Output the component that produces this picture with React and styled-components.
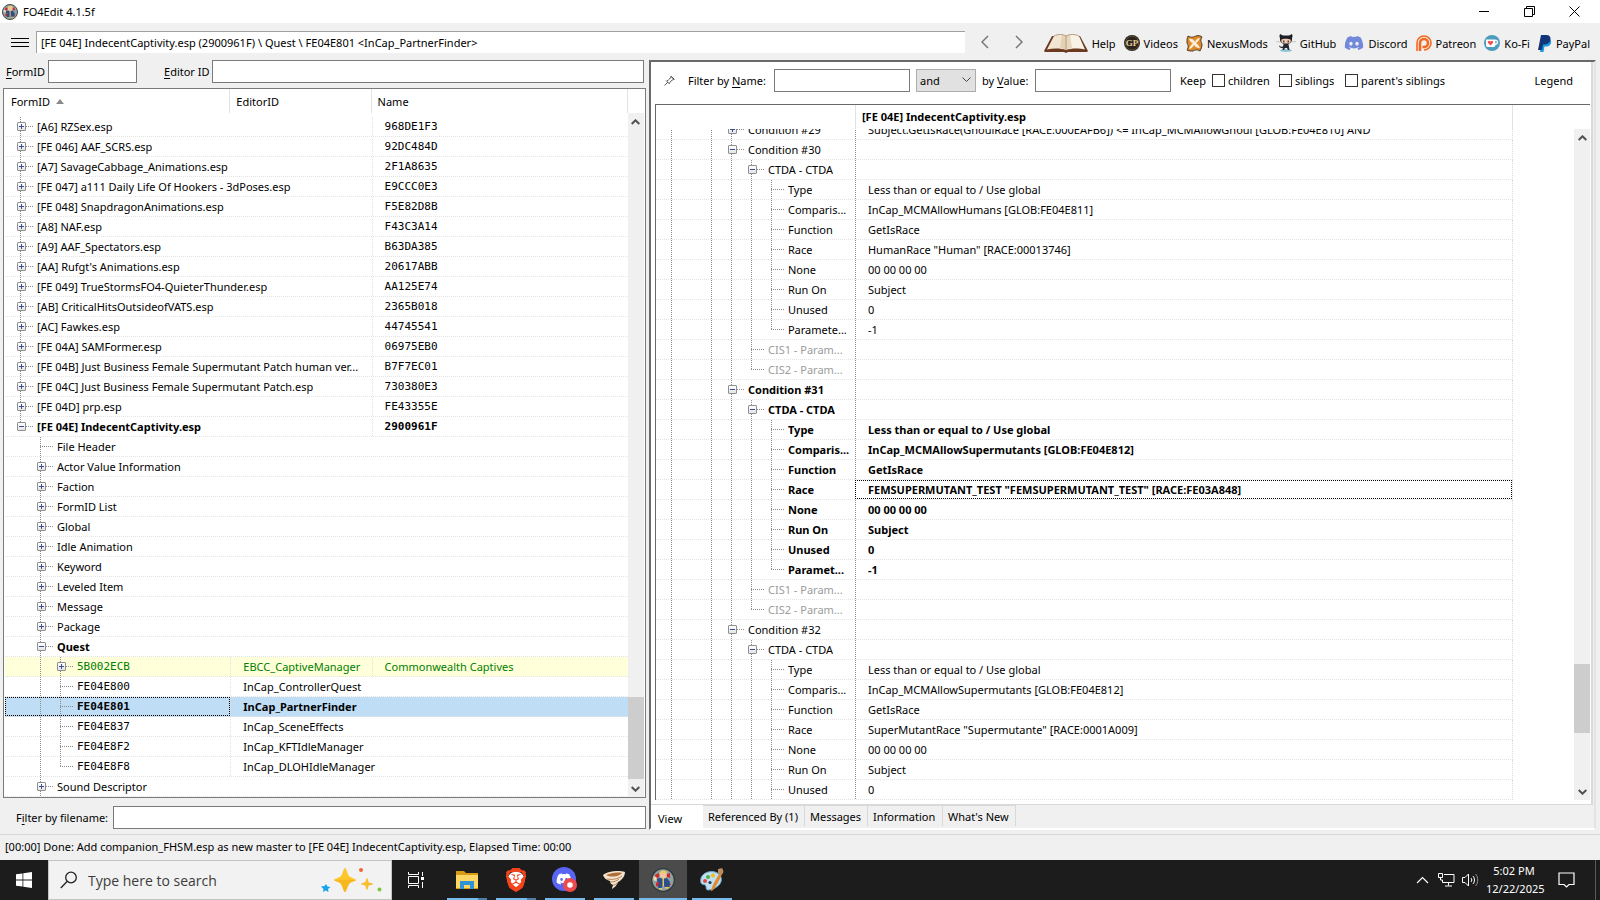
import React from "react"
import styled, { createGlobalStyle, css } from "styled-components"
import { FaDiscord } from "react-icons/fa"
import { SiBrave } from "react-icons/si"

const links = [
  { text: "Help", icon: "book", width: 44 },
  { text: "Videos", icon: "gp", width: 16 },
  { text: "NexusMods", icon: "nexus", width: 17 },
  { text: "GitHub", icon: "octocat", width: 20 },
  { text: "Discord", icon: "discord", width: 20 },
  { text: "Patreon", icon: "patreon", width: 16 },
  { text: "Ko-Fi", icon: "kofi", width: 16 },
  { text: "PayPal", icon: "paypal", width: 14 },
]

const files = [
  ["[A6] RZSex.esp", "968DE1F3"],
  ["[FE 046] AAF_SCRS.esp", "92DC484D"],
  ["[A7] SavageCabbage_Animations.esp", "2F1A8635"],
  ["[FE 047] a111 Daily Life Of Hookers - 3dPoses.esp", "E9CCC0E3"],
  ["[FE 048] SnapdragonAnimations.esp", "F5E82D8B"],
  ["[A8] NAF.esp", "F43C3A14"],
  ["[A9] AAF_Spectators.esp", "B63DA385"],
  ["[AA] Rufgt's Animations.esp", "20617ABB"],
  ["[FE 049] TrueStormsFO4-QuieterThunder.esp", "AA125E74"],
  ["[AB] CriticalHitsOutsideofVATS.esp", "2365B018"],
  ["[AC] Fawkes.esp", "44745541"],
  ["[FE 04A] SAMFormer.esp", "06975EB0"],
  ["[FE 04B] Just Business Female Supermutant Patch human ver...", "B7F7EC01"],
  ["[FE 04C] Just Business Female Supermutant Patch.esp", "730380E3"],
  ["[FE 04D] prp.esp", "FE43355E"],
]

const groups = [
  "Actor Value Information",
  "Faction",
  "FormID List",
  "Global",
  "Idle Animation",
  "Keyword",
  "Leveled Item",
  "Message",
  "Package",
]

const records = [
  { id: "5B002ECB", editor: "EBCC_CaptiveManager", name: "Commonwealth Captives", box: "+", master: true },
  { id: "FE04E800", editor: "InCap_ControllerQuest" },
  { id: "FE04E801", editor: "InCap_PartnerFinder", selected: true },
  { id: "FE04E837", editor: "InCap_SceneEffects" },
  { id: "FE04E8F2", editor: "InCap_KFTIdleManager" },
  { id: "FE04E8F8", editor: "InCap_DLOHIdleManager", last: true },
]

const condition = (title, fields, { bold = false, closed = true } = {}) => [
  { label: title, guides: "1011", box: "-", bold },
  { label: "CTDA - CTDA", guides: "10111", box: "-", bold },
  ...fields.map(([label, value, focused], i) => ({
    label,
    value,
    focused,
    bold,
    guides: "101111",
    last: closed && i === fields.length - 1,
  })),
  ...(closed
    ? [
        { label: "CIS1 - Param...", guides: "10111", muted: true },
        { label: "CIS2 - Param...", guides: "10111", muted: true, last: true },
      ]
    : []),
]

const elements = [
  {
    label: "Condition #29",
    guides: "1011",
    box: "+",
    value: "Subject.GetIsRace(GhoulRace [RACE:000EAFB6]) <= InCap_MCMAllowGhoul [GLOB:FE04E810] AND",
  },
  ...condition("Condition #30", [
    ["Type", "Less than or equal to / Use global"],
    ["Comparis...", "InCap_MCMAllowHumans [GLOB:FE04E811]"],
    ["Function", "GetIsRace"],
    ["Race", 'HumanRace "Human" [RACE:00013746]'],
    ["None", "00 00 00 00"],
    ["Run On", "Subject"],
    ["Unused", "0"],
    ["Paramete...", "-1"],
  ]),
  ...condition(
    "Condition #31",
    [
      ["Type", "Less than or equal to / Use global"],
      ["Comparis...", "InCap_MCMAllowSupermutants [GLOB:FE04E812]"],
      ["Function", "GetIsRace"],
      ["Race", 'FEMSUPERMUTANT_TEST "FEMSUPERMUTANT_TEST" [RACE:FE03A848]', true],
      ["None", "00 00 00 00"],
      ["Run On", "Subject"],
      ["Unused", "0"],
      ["Paramet...", "-1"],
    ],
    { bold: true }
  ),
  ...condition(
    "Condition #32",
    [
      ["Type", "Less than or equal to / Use global"],
      ["Comparis...", "InCap_MCMAllowSupermutants [GLOB:FE04E812]"],
      ["Function", "GetIsRace"],
      ["Race", 'SuperMutantRace "Supermutante" [RACE:0001A009]'],
      ["None", "00 00 00 00"],
      ["Run On", "Subject"],
      ["Unused", "0"],
    ],
    { closed: false }
  ),
]

const BrandIcon = ({ name }) => {
  switch (name) {
    case "book":
      return (
        <svg width="44" height="19" viewBox="0 0 44 19">
          <path d="M0 17 8 2h28l8 15-1 1H24l-2 1-2-1H1z" fill="#6b3a20" />
          <path d="M3 15.500 10 2c4-2 9-2 12 0v14c-5-2-13-2-19-.5z" fill="#f1e6d4" />
          <path d="M41 15.500 35 2c-4-2-9-2-13 0v14c5-2 13-2 19-.5z" fill="#f9f2e7" />
          <path d="M22 2c-2-1-3-1-4-1l-2 13c2 0 4 1 6 2 2-1 4-2 6-2L26 1c-2 0-3 0-4 1z" fill="#dcc3a2" opacity=".6" />
          <path d="M22 2v14M10 2c4-2 9-2 12 0 4-2 9-2 13 0" fill="none" stroke="#b59c7d" />
        </svg>
      )
    case "gp":
      return (
        <svg width="16" height="16" viewBox="0 0 16 16">
          <circle cx="8" cy="8" r="8" fill="#2c241b" />
          <circle cx="8" cy="8" r="6.800" fill="none" stroke="#5a4b36" />
          <text x="8" y="11" textAnchor="middle" fontFamily="Liberation Serif, serif" fontWeight="700" fontSize="9" fill="#e4cf9f">
            GP
          </text>
        </svg>
      )
    case "nexus":
      return (
        <svg width="17" height="17" viewBox="0 0 17 17">
          <path d="M2 1c3 2 6 1 8 0 2-1 5 0 6 1-2 3-1 5 0 7 0 3-1 5-2 7-3-2-5-1-7 0-2 0-5 0-6-1 2-3 1-5 0-7 0-3 0-5 1-7z" fill="#de8a27" stroke="#4d3a27" />
          <path d="M3 4c3-1 5 1 6 3 1-3 3-4 5-4-1 2-2 4-4 5 2 1 3 3 4 5-3 0-5-1-6-3-1 2-3 4-5 4 1-3 2-4 4-6-2 0-3-2-4-4z" fill="#fbeeda" />
        </svg>
      )
    case "octocat":
      return (
        <svg width="20" height="18" viewBox="0 0 20 18">
          <ellipse cx="10" cy="16.500" rx="6" ry="1.500" fill="#8dc4da" />
          <path d="M0 7.500 4 8M20 7.500 16 8" stroke="#aaa" strokeWidth=".6" />
          <path d="M4 0l3 1.500h6L16 0c.7 2 .6 3 0 4 .5 4-2 6-6 6s-6.500-2-6-6c-.6-1-.7-2 0-4z" fill="#1d2125" />
          <path d="M5.500 5.500c1-1 7-1 9 0 1 3-1 4-4.500 4s-5.300-1-4.500-4z" fill="#f2cbb4" />
          <path d="M7 6.500h1.500v2H7zM11.500 6.500H13v2h-1.500z" fill="#5b3a30" />
          <path d="M7.500 10h5l1 6H12l-1-2H9l-1 2H6.500zM3 11c1 2 3 2 5 1v1.500c-3 1-5 0-5-2.500z" fill="#22282e" />
        </svg>
      )
    case "discord":
      return <FaDiscord size={20} color="#7289da" />
    case "patreon":
      return (
        <svg width="16" height="16" viewBox="0 0 16 16">
          <path d="M1 16V8a7 7 0 1 1 7 7" fill="none" stroke="#f4681f" strokeWidth="1.600" />
          <path d="M4 16V8a4 4 0 1 1 4 4H6.500" fill="none" stroke="#f4681f" strokeWidth="2.600" />
        </svg>
      )
    case "kofi":
      return (
        <svg width="16" height="16" viewBox="0 0 16 16">
          <circle cx="8" cy="8" r="8" fill="#4b9cbf" />
          <path d="M2 4.500h9c4 0 4.500 5 .5 5.500-.5 1.500-1 2-2 2H4c-1.500 0-2-1-2-2z" fill="#fff" />
          <path d="M11.300 6v2.500c2 0 2-2.500 0-2.500z" fill="#4b9cbf" />
          <path d="M6.500 10.500 4 8c-1-2 1.500-3 2.500-1.500C7.500 5 10 6 9 8z" fill="#f0564f" />
        </svg>
      )
    default:
      return (
        <svg width="14" height="17" viewBox="0 0 14 17">
          <path d="M5 4h6.500c3 1.500 2 7.500-3.500 7.500H6.500L5.500 17H2z" fill="#1a9be0" />
          <path d="M3 0h5.500C15 0 13 9.500 7 9.500H5L4 15H0z" fill="#123479" />
        </svg>
      )
  }
}

const VaultBadge = ({ size }) => (
  <svg width={size} height={size} viewBox="0 0 24 24">
    <circle cx="12" cy="12" r="11.300" fill="#8fa0a2" stroke="#33393b" strokeWidth="1.300" />
    <path d="M4 7l4-2v4l-3 2zM16 6l3-1v5l-3-1zM5 15l3-2v6l-3-1zM17 15l3 1-2 3-2-1z" fill="#d3262a" />
    <path d="M5 11l4-1 3 1 4-1 3 4-1 6-4-1-2-2-2 4-3-1 1-6-3-1z" fill="#2a508c" />
    <path d="M11.500 10h1.500v8h-1.500zM8 20h3v1.500H8zM14 19h4v1.500h-4z" fill="#e8c75a" />
    <path d="M9 4.500h6.500V8c0 3-6.500 3-6.500 0z" fill="#efc6a0" />
    <path d="M8.500 6c-1-4 8-5 7.500-.5-2-1-5-1.500-7.500.5z" fill="#eed05e" />
    <path d="M2.500 8.500l3 .5.500 4-3.500-.5z" fill="#f0dcb0" />
  </svg>
)

const PinIcon = () => (
  <svg width="11" height="11" viewBox="0 0 11 11" fill="none" stroke="#55585d">
    <path d="M.5 10.500 4 7M2 5.500 5.500 9M3 6c1-1 2-1 2.500-2L7.500 1.500 10 4 7 6c-1 1-1 1.500-1.500 2.500M6.500 1l4 4" />
  </svg>
)

const TreeLabel = ({ guides, box, last, children, mono }) => (
  <Indent>
    {guides.slice(0, -1).split("").map((g, i) => (
      <Guide key={i} $line={g === "1"} />
    ))}
    <Node $last={last}>{box && <Expander type="button" $open={box === "-"} aria-label={box === "-" ? "Collapse" : "Expand"} />}</Node>
    <Label $mono={mono}>{children}</Label>
  </Indent>
)

const NavigationTree = () => (
  <Tree>
    <thead>
      <NavHeader>
        <NavHead>
          FormID <SortArrow />
        </NavHead>
        <NavHead>EditorID</NavHead>
        <NavHead>Name</NavHead>
      </NavHeader>
    </thead>
    <TreeRows>
      {files.map(([name, crc]) => (
        <NavRow key={name}>
          <Cell colSpan={2} $span={2}>
            <TreeLabel guides="1" box="+">{name}</TreeLabel>
          </Cell>
          <Cell $line $mono $pad>{crc}</Cell>
        </NavRow>
      ))}
      <NavRow $bold>
        <Cell colSpan={2} $span={2}>
          <TreeLabel guides="1" box="-" last>[FE 04E] IndecentCaptivity.esp</TreeLabel>
        </Cell>
        <Cell $line $mono $pad>2900961F</Cell>
      </NavRow>
      <NavRow>
        <Cell colSpan={3} $span={3}>
          <TreeLabel guides="01">File Header</TreeLabel>
        </Cell>
      </NavRow>
      {groups.map(name => (
        <NavRow key={name}>
          <Cell colSpan={3} $span={3}>
            <TreeLabel guides="01" box="+">{name}</TreeLabel>
          </Cell>
        </NavRow>
      ))}
      <NavRow $bold>
        <Cell colSpan={3} $span={3}>
          <TreeLabel guides="01" box="-">Quest</TreeLabel>
        </Cell>
      </NavRow>
      {records.map(({ id, editor, name, box, master, selected, last }) => (
        <NavRow key={id} $master={master} $selected={selected} $bold={selected}>
          <Cell $focused={selected}>
            <TreeLabel guides="011" box={box} last={last} mono>{id}</TreeLabel>
          </Cell>
          <Cell $line $pad colSpan={name ? 1 : 2} $span={name ? 1 : 2}>{editor}</Cell>
          {name && <Cell $line $pad>{name}</Cell>}
        </NavRow>
      ))}
      <NavRow>
        <Cell colSpan={3} $span={3}>
          <TreeLabel guides="01" box="+">Sound Descriptor</TreeLabel>
        </Cell>
      </NavRow>
    </TreeRows>
  </Tree>
)

const ElementTree = () => (
  <Tree>
    <thead>
      <ViewHeader>
        <ViewHead aria-label="Element" />
        <ViewHead>[FE 04E] IndecentCaptivity.esp</ViewHead>
      </ViewHeader>
    </thead>
    <TreeRows>
      {elements.map(({ label, value, guides, box, last, bold, muted, focused }, i) => (
        <ViewRow key={i} $bold={bold} $muted={muted}>
          <Cell>
            <TreeLabel guides={guides} box={box} last={last}>{label}</TreeLabel>
          </Cell>
          <Cell $dark $pad $focused={focused}>{value}</Cell>
        </ViewRow>
      ))}
    </TreeRows>
  </Tree>
)

const Arrow = ({ up }) => (
  <svg width="9" height="6" viewBox="0 0 9 6" fill="none" stroke="#505050" strokeWidth="2">
    <path d={up ? "M.7 5 4.500 1.300 8.300 5" : "M.7 1 4.500 4.700 8.300 1"} />
  </svg>
)

const ScrollBar = ({ before, thumb, after }) => (
  <Scroll>
    <ScrollButton type="button" aria-label="Scroll up"><Arrow up /></ScrollButton>
    <Track $grow={before} />
    <Thumb $grow={thumb} />
    <Track $grow={after} />
    <ScrollButton type="button" aria-label="Scroll down"><Arrow /></ScrollButton>
  </Scroll>
)

const App = () => (
  <Desktop>
    <GlobalStyle />
    <TitleBar>
      <VaultBadge size={16} />
      <Title>FO4Edit 4.1.5f</Title>
      <WindowButton type="button" aria-label="Minimize">
        <svg width="11" height="11"><path d="M0 5.500h10" stroke="#000" /></svg>
      </WindowButton>
      <WindowButton type="button" aria-label="Restore">
        <svg width="11" height="11" fill="none" stroke="#000"><path d="M.5 2.500h8v8h-8zM2.500 2.500v-2h8v8h-2" /></svg>
      </WindowButton>
      <WindowButton type="button" aria-label="Close">
        <svg width="11" height="11"><path d="M.5.5l10 10M10.500.5l-10 10" stroke="#000" /></svg>
      </WindowButton>
    </TitleBar>
    <ToolBar>
      <MenuButton type="button" aria-label="Menu"><i /><i /><i /></MenuButton>
      <Address aria-label="Path" readOnly value="[FE 04E] IndecentCaptivity.esp (2900961F) \ Quest \ FE04E801 <InCap_PartnerFinder>" />
      <NavButton type="button" aria-label="Back">
        <svg width="8" height="14" fill="none" stroke="#777"><path d="M7 1 1 7l6 6" strokeWidth="1.500" /></svg>
      </NavButton>
      <NavButton type="button" aria-label="Forward">
        <svg width="8" height="14" fill="none" stroke="#777"><path d="M1 1l6 6-6 6" strokeWidth="1.500" /></svg>
      </NavButton>
      <Links>
        {links.map(({ text, icon, width }) => (
          <ToolLink href="#" key={text}>
            <LinkIcon $width={width}><BrandIcon name={icon} /></LinkIcon>
            {text}
          </ToolLink>
        ))}
      </Links>
    </ToolBar>
    <Main>
      <LeftPanel>
        <SearchRow>
          <FieldLabel htmlFor="formid" $width={42}><u>F</u>ormID</FieldLabel>
          <TextBox id="formid" $width={89} />
          <FieldLabel htmlFor="editorid" $width={48} $space={27}><u>E</u>ditor ID</FieldLabel>
          <TextBox id="editorid" />
        </SearchRow>
        <TreeFrame>
          <NavigationTree />
          <ScrollGutter $top={24}>
            <ScrollBar before={570} thumb={82} after={1} />
          </ScrollGutter>
        </TreeFrame>
        <FileFilter>
          <FieldLabel htmlFor="filename" $width={97}>F<u>i</u>lter by filename:</FieldLabel>
          <TextBox id="filename" />
        </FileFilter>
      </LeftPanel>
      <RightPanel>
        <ViewPage>
          <ViewFilter>
            <PinButton type="button" aria-label="Pin"><PinIcon /></PinButton>
            <FieldLabel htmlFor="byname" $width={86}>Filter by <u>N</u>ame:</FieldLabel>
            <TextBox id="byname" $width={136} />
            <Combo aria-label="Operator" defaultValue="and">
              <option>and</option>
              <option>or</option>
            </Combo>
            <FieldLabel htmlFor="byvalue" $width={53}>by <u>V</u>alue:</FieldLabel>
            <TextBox id="byvalue" $width={136} />
            <Keep>Keep</Keep>
            <Check $width={67}><input type="checkbox" />children</Check>
            <Check $width={66}><input type="checkbox" />siblings</Check>
            <Check><input type="checkbox" />parent's siblings</Check>
            <Legend type="button">Legend</Legend>
          </ViewFilter>
          <ViewFrame>
            <ElementTree />
            <ScrollGutter $top={24} $left={61}>
              <ScrollBar before={519} thumb={69} after={50} />
            </ScrollGutter>
          </ViewFrame>
        </ViewPage>
        <Tabs role="tablist">
          <Tab type="button" role="tab" aria-selected="true" $active $width={52}>View</Tab>
          <Tab type="button" role="tab" $width={102}>Referenced By (1)</Tab>
          <Tab type="button" role="tab" $width={63}>Messages</Tab>
          <Tab type="button" role="tab" $width={75}>Information</Tab>
          <Tab type="button" role="tab" $width={73}>What's New</Tab>
        </Tabs>
      </RightPanel>
    </Main>
    <StatusBar>[00:00] Done: Add companion_FHSM.esp as new master to [FE 04E] IndecentCaptivity.esp, Elapsed Time: 00:00</StatusBar>
    <TaskBar>
      <StartButton type="button" aria-label="Start">
        <svg width="16" height="16" viewBox="0 0 16 16" fill="#fff">
          <path d="M0 2.300 6.500 1.400v6.200H0zM7.300 1.300 16 0v7.600H7.300zM0 8.400h6.500v6.200L0 13.700zM7.300 8.400H16V16l-8.700-1.200z" />
        </svg>
      </StartButton>
      <SearchBox>
        <svg width="18" height="18" viewBox="0 0 18 18" fill="none" stroke="#222" strokeWidth="1.300">
          <circle cx="11" cy="6.500" r="5.300" />
          <path d="M7 10.500.8 17" />
        </svg>
        <input aria-label="Search" placeholder="Type here to search" />
        <svg width="62" height="26" viewBox="0 0 62 26">
          <path d="M24 1c1.500 0 2.500 7 4.500 8.500S35 12 35 13s-4.500 1.500-6.500 3.500S25.500 25 24 25s-2.500-6.500-4.500-8.500S13 14 13 13s4.500-2 6.500-3.500S22.500 1 24 1z" fill="#fdc52a" />
          <path d="M24 25c-1.500 0-2.500-6.500-4.500-8.500S13 14 13 13h22c0 1-4.500 1.500-6.500 3.500S25.500 25 24 25z" fill="#f4a913" opacity=".5" />
          <path d="M46 11c1 0 1 4 2 4.500s4 .5 4 1.500-3 1-4 1.500-1 4.500-2 4.500-1-4-2-4.500-4-.5-4-1.500 3-1 4-1.500 1-4.500 2-4.500z" fill="#f9bd33" />
          <path d="M5 17l1.500 2.500 3 .5-2.500 2 .5 3-3-1.500L2 25l.5-3L0 19.500l3.500-.5z" fill="#16a5ea" />
          <circle cx="40" cy="3" r="2" fill="#ee6630" />
          <circle cx="58.500" cy="22.500" r="2" fill="#7ec63f" />
        </svg>
      </SearchBox>
      <TaskButton type="button" aria-label="Task View">
        <svg width="16" height="16" viewBox="0 0 16 16" fill="none" stroke="#fff">
          <path d="M.5 0v2.500h10V0M.5 16v-2.500h10V16M.5 4.500h10v7H.5zM14.500 0v4M14.500 10v6" />
          <path d="M13 5h3v3h-3z" fill="#fff" stroke="none" />
        </svg>
      </TaskButton>
      <RunningTasks>
        <TaskButton type="button" aria-label="File Explorer" $running $multi>
          <svg width="22" height="18" viewBox="0 0 22 18">
            <path d="M0 0h8l2 2h12v16H0z" fill="#d99a16" />
            <path d="M0 4h22v13H0z" fill="#fdd766" />
            <path d="M4 18v-8h14v8h-4v-4H8v4z" fill="#2d94d8" />
          </svg>
        </TaskButton>
        <TaskButton type="button" aria-label="Brave" $running $multi>
          <BraveMark><SiBrave size={24} color="#f4421a" /></BraveMark>
        </TaskButton>
        <TaskButton type="button" aria-label="Discord" $running>
          <svg width="26" height="26" viewBox="0 0 26 26">
            <circle cx="12" cy="12" r="12" fill="#5865f2" />
            <FaDiscord x="4" y="4" size={16} color="#fff" />
            <circle cx="18" cy="18" r="7" fill="#ed4a50" />
            <circle cx="18" cy="18" r="2.800" fill="#fff" />
          </svg>
        </TaskButton>
        <TaskButton type="button" aria-label="Vortex" $running>
          <svg width="22" height="18" viewBox="0 0 22 18">
            <path d="M0 4C5 0 16-1 22 1c0 4-3 8-7 10-1 3-3 5-6 7 0-2 1-3 1-4-2-1-3-2-3-4C3 9 1 7 0 4z" fill="#f3e3cd" />
            <path d="M3 4c5-2 11-3 16-2-2 3-10 5-16 2z" fill="#b06f38" />
            <path d="M4 8c6 1 11 0 15-3M7 11c4 0 7-1 9-3M10 14c2 0 3-1 4-2" fill="none" stroke="#b98253" />
          </svg>
        </TaskButton>
        <TaskButton type="button" aria-label="FO4Edit" $running $current>
          <VaultBadge size={24} />
        </TaskButton>
        <TaskButton type="button" aria-label="Paint" $running>
          <svg width="24" height="24" viewBox="0 0 24 24">
            <path d="M1 15C-1 7 7 2 15 4c7 2 8 9 4 13-3 3-7 5-11 5-3 0-1-4-3-5-1-1-3 0-4-2z" fill="#bfe0f1" stroke="#6ba5c6" />
            <circle cx="5" cy="13" r="2" fill="#e24540" />
            <circle cx="8" cy="9" r="2" fill="#4fae46" />
            <circle cx="13" cy="7.500" r="2" fill="#f2bb22" />
            <circle cx="10" cy="14.500" r="1.600" fill="#243b52" />
            <path d="M11 23c1-6 5-12 9-18l2 1c-3 7-6 13-10 17z" fill="#e1892f" />
            <path d="M18 1c3 0 4-2 5 1 1 2 0 4-2 5l-3-2z" fill="#b98d5e" />
          </svg>
        </TaskButton>
      </RunningTasks>
      <Tray>
        <TrayButton type="button" aria-label="Show hidden icons">
          <svg width="13" height="8" fill="none" stroke="#fff" strokeWidth="1.200"><path d="M1 7l5.500-5.500L12 7" /></svg>
        </TrayButton>
        <TrayButton type="button" aria-label="Network">
          <svg width="17" height="14" viewBox="0 0 17 14" fill="none" stroke="#fff">
            <path d="M6 1.500h10v8H4.500V7M.5.500h4v4h-4zM2.500 4.500V7h2M10.500 9.500v3M7 13h7" />
          </svg>
        </TrayButton>
        <TrayButton type="button" aria-label="Volume">
          <svg width="17" height="14" viewBox="0 0 17 14" fill="none" stroke="#fff">
            <path d="M.5 4.500H3L6.500 1v12L3 9.500H.5zM9 5c1 1 1 3 0 4M11 3c2 2 2 6 0 8" />
            <path d="M13.500 1c3 3 3 9 0 12" opacity=".5" />
          </svg>
        </TrayButton>
        <Clock>
          <time>5:02 PM</time>
          <time>12/22/2025</time>
        </Clock>
        <TrayButton type="button" aria-label="Notifications">
          <svg width="17" height="17" viewBox="0 0 17 17" fill="none" stroke="#fff" strokeWidth="1.200">
            <path d="M1 1h15v11.500h-5L8.500 15 6 12.500H1z" />
          </svg>
        </TrayButton>
      </Tray>
    </TaskBar>
  </Desktop>
)

export default App

const dots = (angle, color) => `repeating-linear-gradient(${angle}, ${color} 0 1px, transparent 1px 2px)`

const GlobalStyle = createGlobalStyle`
  * {
    box-sizing: border-box;
  }
  body {
    margin: 0;
    overflow: hidden;
  }
  body, input, select, button {
    font-family: "Noto Sans", "Open Sans", sans-serif;
    font-size: 11px;
    color: #000;
  }
  button {
    padding: 0;
    border: 0;
    background: none;
  }
  svg {
    display: block;
    flex: none;
  }
`
const Desktop = styled.div`
  display: flex;
  flex-direction: column;
  height: 100vh;
  background: #f0f0f0;
`
const TitleBar = styled.header`
  display: flex;
  align-items: center;
  height: 23px;
  padding: 0 3px 0 2px;
  background: #fff;
`
const Title = styled.span`
  flex: 1;
  margin-left: 5px;
`
const WindowButton = styled.button`
  display: flex;
  justify-content: center;
  align-items: center;
  width: 45px;
  height: 23px;
`
const ToolBar = styled.nav`
  display: flex;
  align-items: center;
  height: 37px;
  padding: 1px 10px 0 11px;
`
const MenuButton = styled.button`
  display: flex;
  flex-direction: column;
  gap: 3px;
  width: 18px;
  margin-right: 7px;

  i {
    height: 1px;
    background: #000;
  }
`
const Address = styled.input`
  flex: 1;
  min-width: 0;
  height: 22px;
  margin-right: 3px;
  padding: 0 0 1px 4px;
  border: solid #a0a0a0;
  border-width: 1px 0 0 1px;
  background: #fff;
  outline: 0;
`
const NavButton = styled.button`
  display: flex;
  justify-content: center;
  width: 34px;
`
const Links = styled.div`
  display: flex;
  gap: 8px;
  margin-left: 8px;
  padding-top: 2px;
`
const ToolLink = styled.a`
  display: flex;
  align-items: center;
  gap: 4px;
  color: #000;
  text-decoration: none;
`
const LinkIcon = styled.span`
  display: flex;
  justify-content: center;
  width: ${({ $width }) => $width}px;
`
const Main = styled.main`
  display: flex;
  flex: 1;
  min-height: 0;
  padding-right: 4px;
`
const LeftPanel = styled.section`
  display: flex;
  flex-direction: column;
  flex: 15 1 0;
  min-width: 0;
  padding: 0 3px;
`
const SearchRow = styled.div`
  display: flex;
  align-items: center;
  height: 28px;
  padding: 0 2px 5px 3px;
`
const FieldLabel = styled.label`
  flex: none;
  width: ${({ $width }) => $width}px;
  margin-left: ${({ $space = 0 }) => $space}px;
  white-space: nowrap;

  u {
    text-underline-offset: 2px;
  }
`
const TextBox = styled.input`
  flex: ${({ $width }) => ($width ? `0 0 ${$width}px` : "1")};
  min-width: 0;
  height: 23px;
  border: 1px solid #7a7a7a;
  background: #fff;
  outline: 0;
`
const TreeFrame = styled.div`
  display: flex;
  flex: 1;
  min-height: 0;
  padding: 0 1px;
  border: 1px solid #7a7a7a;
  background: #fff;
`
const Tree = styled.table`
  display: flex;
  flex: 1;
  flex-direction: column;
  min-width: 0;
  border-spacing: 0;

  thead {
    display: block;
  }
`
/* the tree is scrolled, so its rows hang from the lower edge */
const TreeRows = styled.tbody`
  display: flex;
  flex: 1;
  flex-direction: column;
  justify-content: flex-end;
  min-height: 0;
  overflow: hidden;
`
const columns = css`
  display: grid;
  grid-template-columns: minmax(0, 225fr) minmax(0, 141fr) minmax(0, 256fr);
`
const NavHeader = styled.tr`
  ${columns}
  height: 24px;
`
const NavHead = styled.th`
  display: flex;
  align-items: center;
  gap: 6px;
  padding: 0 6px;
  border-right: 1px solid #e2e2e2;
  font-weight: 400;
`
const SortArrow = styled.i`
  border: solid transparent;
  border-width: 0 4px 5px;
  border-bottom-color: #8a8a8a;
`
const rowLook = css`
  height: 20px;
  flex: none;
  font-weight: ${({ $bold }) => ($bold ? 700 : 400)};
  background: ${dots("90deg", "#e4e4e4")} 0 100% / 100% 1px no-repeat;
`
const NavRow = styled.tr`
  ${columns}
  ${rowLook}
  color: ${({ $master }) => ($master ? "#008000" : "#000")};
  background-color: ${({ $master, $selected }) => ($master ? "#ffffd9" : $selected ? "#bfddf5" : "transparent")};
`
const monoFont = css`
  font-family: "DejaVu Sans Mono", monospace;
`
const Cell = styled.td`
  grid-column: span ${({ $span = 1 }) => $span};
  min-width: 0;
  height: 19px;
  padding: 0 0 0 ${({ $pad }) => ($pad ? 13 : 0)}px;
  overflow: hidden;
  white-space: nowrap;
  line-height: 19px;
  background: ${({ $line, $dark }) =>
    $line || $dark ? `${dots("180deg", $dark ? "#8c8c8c" : "#e0e0e0")} 0 0 / 1px 100% no-repeat` : "none"};
  ${({ $mono }) => $mono && monoFont}
  ${({ $focused }) => $focused && "outline: 1px dotted #000; outline-offset: -1px;"}
`
const Indent = styled.div`
  display: flex;
  align-items: center;
  height: 19px;
  padding-left: 6px;
`
const Guide = styled.span`
  flex: none;
  width: 20px;
  height: 20px;
  background: ${({ $line }) => ($line ? `${dots("180deg", "#8c8c8c")} 9px 0 / 1px 100% no-repeat` : "none")};
`
const Node = styled.span`
  display: flex;
  align-items: center;
  flex: none;
  width: 26px;
  height: 20px;
  padding-left: 6px;
  background: ${dots("180deg", "#8c8c8c")} 9px 0 / 1px ${({ $last }) => ($last ? "50%" : "100%")} no-repeat,
    ${dots("90deg", "#8c8c8c")} 9px 9px / 14px 1px no-repeat;
`
const Expander = styled.button`
  width: 9px;
  height: 9px;
  border: 1px solid #8f8f8f;
  border-radius: 1px;
  background: linear-gradient(#3a4f9c, #3a4f9c) 1px 3px / 5px 1px no-repeat,
    ${({ $open }) => !$open && "linear-gradient(#3a4f9c, #3a4f9c) 3px 1px / 1px 5px no-repeat,"}
    linear-gradient(#fff, #e4e4e4);
`
const Label = styled.span`
  overflow: hidden;
  ${({ $mono }) => $mono && monoFont}
`
const ScrollGutter = styled.div`
  display: flex;
  padding-top: ${({ $top }) => $top}px;
  padding-left: ${({ $left = 0 }) => $left}px;
`
const Scroll = styled.div`
  display: flex;
  flex-direction: column;
  width: 16px;
  background: #f0f0f0;
`
const ScrollButton = styled.button`
  display: flex;
  justify-content: center;
  align-items: center;
  flex: none;
  height: 17px;
`
const Track = styled.div`
  flex: ${({ $grow }) => $grow} 1 0;
`
const Thumb = styled.div`
  flex: ${({ $grow }) => $grow} 1 0;
  background: #cdcdcd;
`
const FileFilter = styled.div`
  display: flex;
  align-items: center;
  height: 36px;
  padding: 3px 0 0 13px;
`
const RightPanel = styled.section`
  display: flex;
  flex-direction: column;
  flex: 22 1 0;
  min-width: 0;
  margin-bottom: 4px;
  border: 2px solid;
  border-color: #696969 #e3e3e3 #fff #696969;
`
const ViewPage = styled.div`
  display: flex;
  flex: 1;
  flex-direction: column;
  min-height: 0;
  margin-right: 1px;
  padding: 0 1px 4px 4px;
  border-right: 2px solid #d9d9d9;
  border-bottom: 1px solid #d9d9d9;
  background: #fff;
`
const ViewFilter = styled.div`
  display: flex;
  align-items: center;
  flex: none;
  height: 42px;
  padding: 0 17px 6px 9px;
`
const PinButton = styled.button`
  margin-right: 13px;
`
const Combo = styled.select`
  width: 60px;
  height: 23px;
  margin: 0 6px;
  padding-left: 3px;
  appearance: none;
  border: 1px solid #adadad;
  background: #e1e1e1
    url("data:image/svg+xml,%3Csvg xmlns='http://www.w3.org/2000/svg' width='9' height='6' fill='none' stroke='%23444'%3E%3Cpath d='M.5.5l4 4 4-4'/%3E%3C/svg%3E")
    right 4px center no-repeat;
`
const Keep = styled.span`
  width: 32px;
  margin-left: 9px;
`
const Check = styled.label`
  display: flex;
  align-items: center;
  gap: 3px;
  flex: none;
  width: ${({ $width }) => ($width ? `${$width}px` : "auto")};

  input {
    appearance: none;
    width: 13px;
    height: 13px;
    margin: 0;
    border: 1px solid #333;
    background: #fff;
  }
`
const Legend = styled.button`
  margin-left: auto;
`
const ViewFrame = styled.div`
  display: flex;
  flex: 1;
  min-height: 0;
  border: solid #696969;
  border-width: 1px 0 0 1px;
`
const ViewHeader = styled.tr`
  display: grid;
  grid-template-columns: 200px minmax(0, 1fr);
  height: 24px;
`
const ViewHead = styled.th`
  padding: 2px 6px 0;
  border-right: 1px solid #e2e2e2;
  line-height: 20px;
  text-align: left;
`
const ViewRow = styled.tr`
  display: grid;
  grid-template-columns: 199px minmax(0, 1fr);
  border-right: 1px dotted #dcdcdc;
  ${rowLook}
  color: ${({ $muted }) => ($muted ? "#9c9c9c" : "#000")};
`
const Tabs = styled.div`
  display: flex;
  align-items: flex-start;
  height: 23px;
`
const Tab = styled.button`
  width: ${({ $width }) => $width}px;
  height: ${({ $active }) => ($active ? 23 : 21)}px;
  padding: ${({ $active }) => ($active ? "3px 0 0 7px" : "0 0 0 5px")};
  border: solid #d9d9d9;
  border-width: ${({ $active }) => ($active ? "0" : "1px 1px 0 0")};
  background: ${({ $active }) => ($active ? "#fff" : "#f0f0f0")};
  text-align: left;
  white-space: nowrap;
`
const StatusBar = styled.footer`
  flex: none;
  height: 26px;
  padding-left: 5px;
  border-top: 1px solid #d7d7d7;
  line-height: 24px;
`
const TaskBar = styled.footer`
  display: flex;
  align-items: stretch;
  flex: none;
  height: 40px;
  background: #1c1c1c;
`
const StartButton = styled.button`
  display: flex;
  justify-content: center;
  align-items: center;
  width: 48px;
`
const SearchBox = styled.label`
  display: flex;
  align-items: center;
  width: 344px;
  padding: 0 8px 0 11px;
  border: 1px solid #c4c4c4;
  background: #f2f2f2;

  input {
    flex: 1;
    min-width: 0;
    padding: 0 0 0 10px;
    border: 0;
    background: none;
    font-family: "Open Sans", sans-serif;
    font-size: 14px;
    outline: 0;
  }
  input::placeholder {
    color: #3c3c3c;
  }
`
const RunningTasks = styled.div`
  display: flex;
  gap: 1px;
  margin-left: 3px;
`
const TaskButton = styled.button`
  display: flex;
  justify-content: center;
  align-items: center;
  flex: none;
  width: 48px;
  background: ${({ $current, $running, $multi }) =>
    $running
      ? `linear-gradient(90deg, #76b9ed 0 ${$multi ? "77%" : "100%"}, #4f7fa6 0) 50% 100% / ${$current ? "100%" : "40px"} 2px no-repeat`
      : "none"};
  background-color: ${({ $current }) => ($current ? "#4b4b4b" : "transparent")};
`
const BraveMark = styled.span`
  background: radial-gradient(#fff 0 8px, transparent 9px);
`
const Tray = styled.div`
  display: flex;
  align-items: center;
  gap: 7px;
  margin-left: auto;
  margin-right: 4px;
  padding-right: 20px;
  border-right: 1px solid #5a5a5a;
`
const TrayButton = styled.button`
  display: flex;
  justify-content: center;
  width: 17px;
`
const Clock = styled.div`
  display: flex;
  flex-direction: column;
  width: 56px;
  margin-right: 9px;
  color: #fff;
  line-height: 18px;
  text-align: center;
`
